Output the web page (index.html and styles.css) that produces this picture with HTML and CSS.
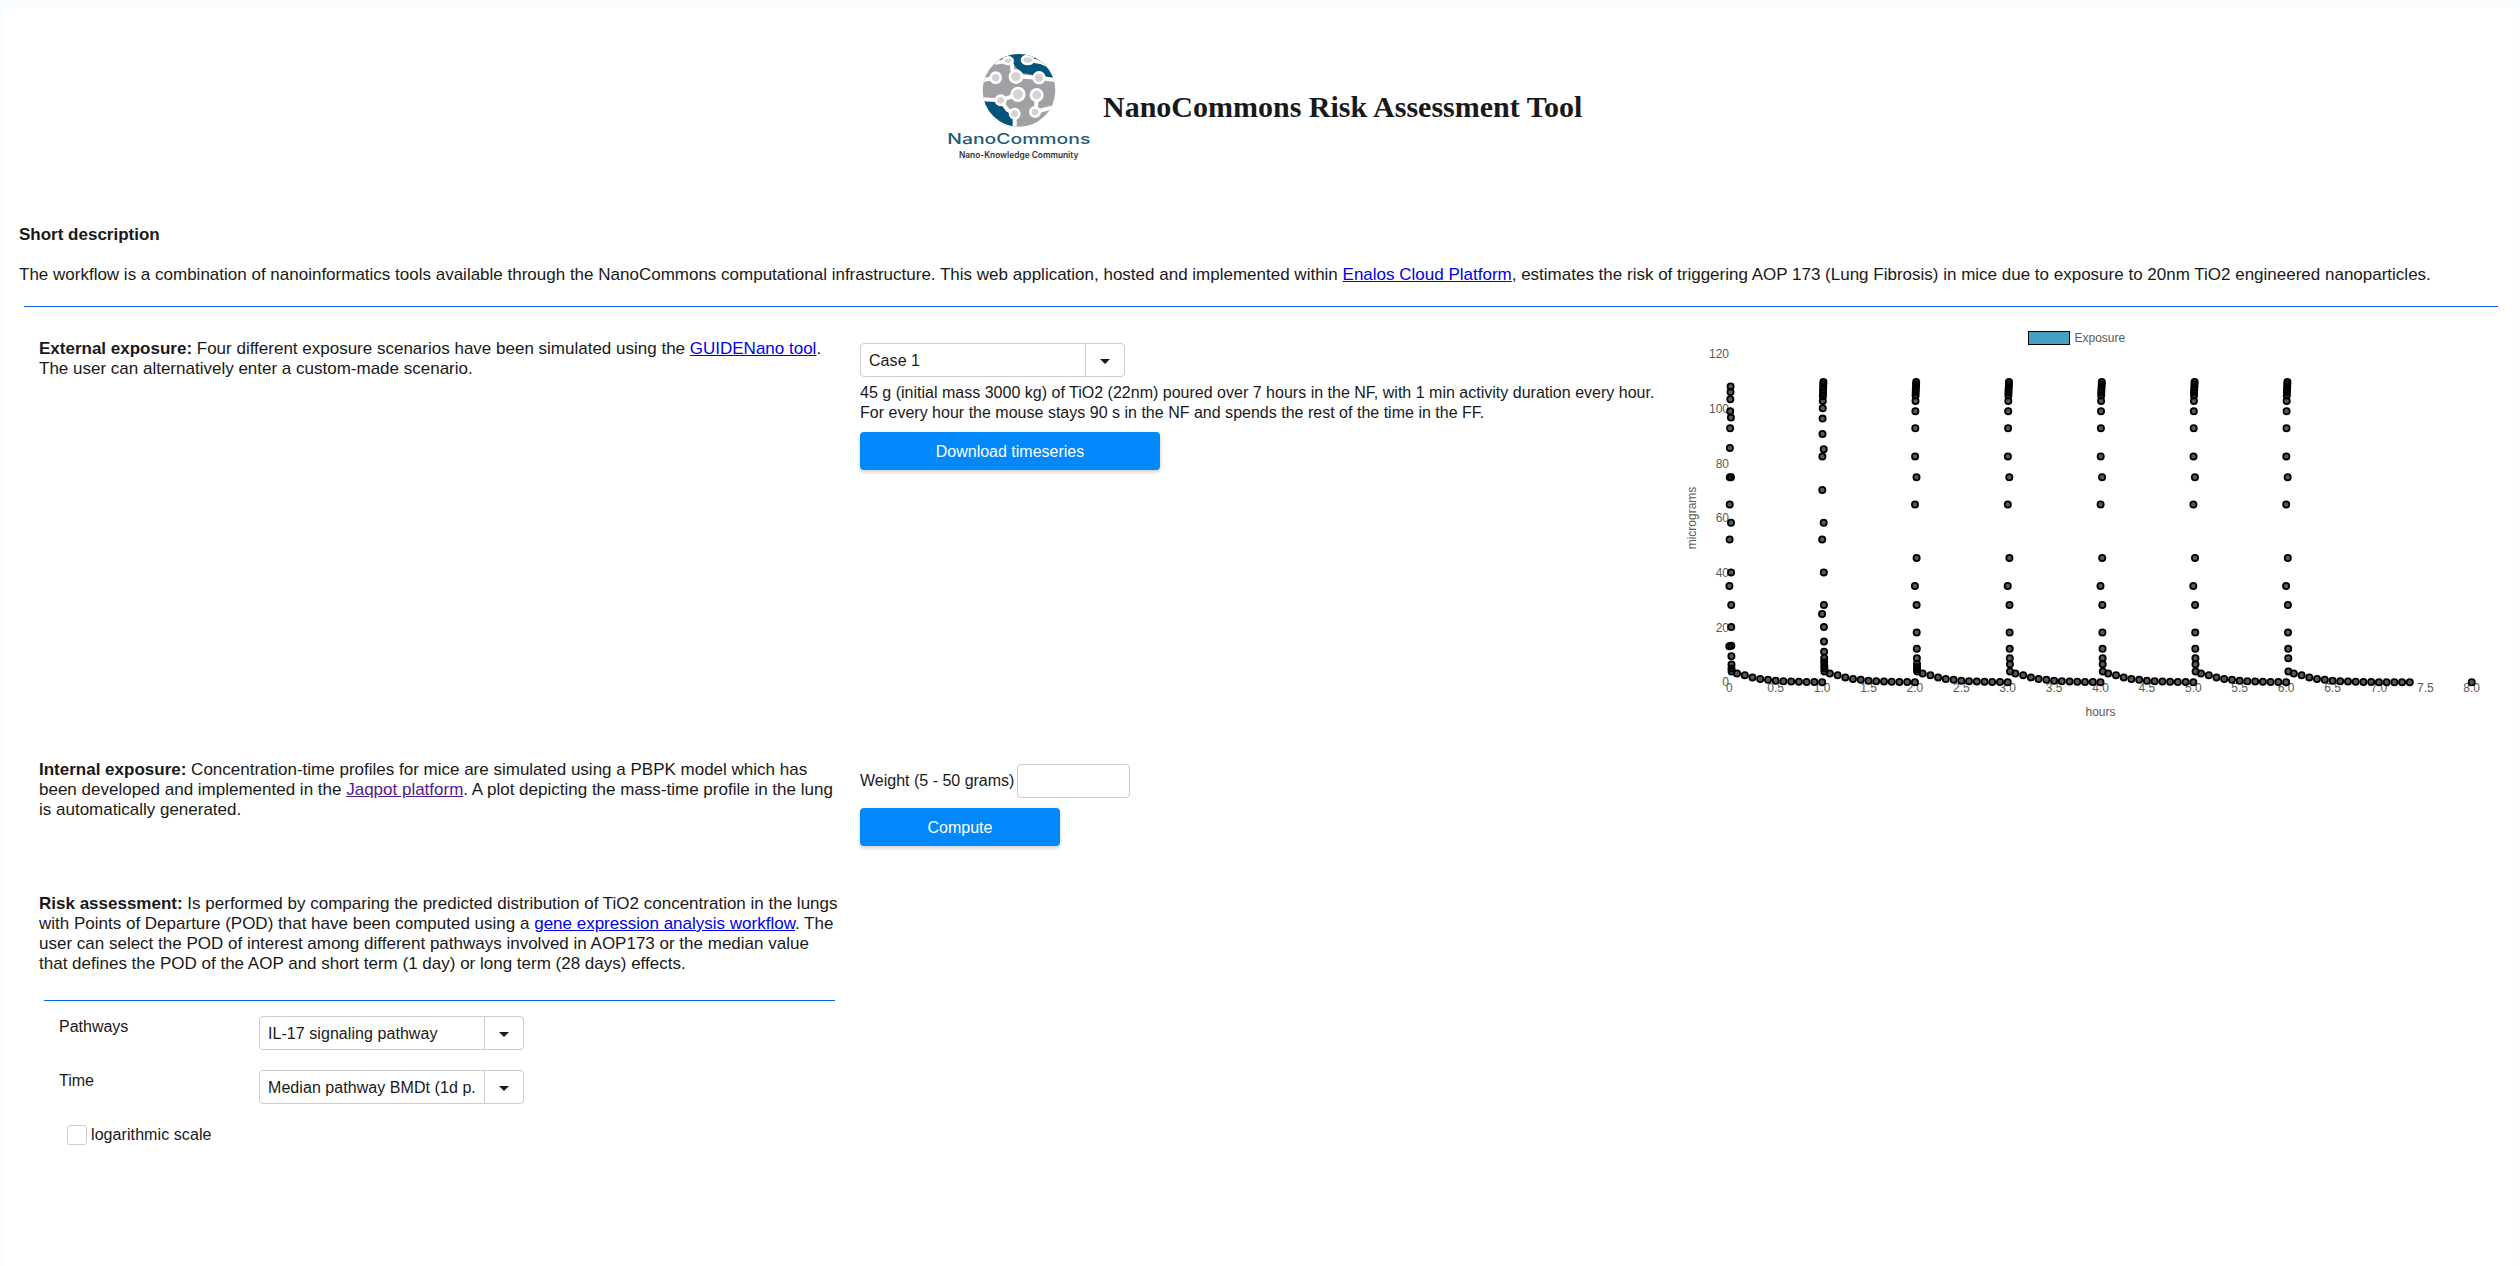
FILE: index.html
```html
<!DOCTYPE html>
<html lang="en">
<head>
<meta charset="utf-8">
<title>NanoCommons Risk Assessment Tool</title>
<link rel="stylesheet" href="styles.css">
</head>
<body>
<main class="page">
  <header class="header">
    <svg class="logo" viewBox="0 0 600 450" role="img" aria-label="NanoCommons">
      <defs><clipPath id="globe"><circle cx="297" cy="181" r="109"/></clipPath></defs>
      <g clip-path="url(#globe)">
        <rect x="180" y="60" width="230" height="240" fill="#9fa1a4"/>
        <path d="M225 60H410V144L357 143L330 133L300 128Q286 104 264 92L225 99Z" fill="#05527b"/>
        <path d="M180 213L241 212L266 244L284 252V300H180Z" fill="#05527b"/>
        <g class="traces">
          <path d="M225 98L264 92L276 104L277 120L288 139L357 143L412 151"/>
          <path d="M323 90L362 96L385 106"/>
          <path d="M185 151L227 143"/>
          <path d="M185 208L241 211L294 193"/>
          <path d="M241 211L263 240L284 251V300"/>
          <path d="M350 195L349 224L345 246L395 233"/>
        </g>
        <g class="nodes">
          <ellipse cx="264" cy="92" rx="14" ry="10"/>
          <ellipse cx="323" cy="90" rx="17" ry="12"/>
          <circle cx="227" cy="143" r="15"/>
          <circle cx="288" cy="140" r="18"/>
          <circle cx="357" cy="143" r="16"/>
          <circle cx="294" cy="193" r="19"/>
          <circle cx="350" cy="195" r="17"/>
          <circle cx="242" cy="211" r="14"/>
          <circle cx="284" cy="251" r="14"/>
          <circle cx="345" cy="246" r="14"/>
        </g>
      </g>
      <text class="logo-name" x="82" y="341" textLength="429" lengthAdjust="spacingAndGlyphs">NanoCommons</text>
      <text class="logo-tag" x="117" y="383" textLength="358" lengthAdjust="spacingAndGlyphs">Nano-Knowledge Community</text>
    </svg>
    <h1 class="title">NanoCommons Risk Assessment Tool</h1>
  </header>

  <section class="intro">
    <h2 class="intro-title">Short description</h2>
    <p class="intro-text">The workflow is a combination of nanoinformatics tools available through the NanoCommons computational infrastructure. This web application, hosted and implemented within <a href="#">Enalos Cloud Platform</a>, estimates the risk of triggering AOP 173 (Lung Fibrosis) in mice due to exposure to 20nm TiO2 engineered nanoparticles.</p>
  </section>
  <hr class="rule">

  <section class="row external">
    <p class="text"><b>External exposure:</b> Four different exposure scenarios have been simulated using the <a href="#">GUIDENano tool</a>.<br>The user can alternatively enter a custom-made scenario.</p>
    <div class="controls">
      <div class="combo"><span class="combo-value">Case 1</span><span class="combo-arrow"></span></div>
      <p class="case-info">45 g (initial mass 3000 kg) of TiO2 (22nm) poured over 7 hours in the NF, with 1 min activity duration every hour.<br>For every hour the mouse stays 90 s in the NF and spends the rest of the time in the FF.</p>
      <button class="btn btn-download">Download timeseries</button>
    </div>
    <svg class="chart" id="chart" viewBox="0 0 830 400"></svg>
  </section>

  <section class="row internal">
    <p class="text"><b>Internal exposure:</b> Concentration-time profiles for mice are simulated using a PBPK model which has<br>been developed and implemented in the <a class="visited" href="#">Jaqpot platform</a>. A plot depicting the mass-time profile in the lung<br>is automatically generated.</p>
    <div class="controls">
      <label class="weight">Weight (5 - 50 grams)<input class="weight-input" type="text"></label>
      <button class="btn btn-compute">Compute</button>
    </div>
  </section>

  <section class="risk">
    <p class="text"><b>Risk assessment:</b> Is performed by comparing the predicted distribution of TiO2 concentration in the lungs<br>with Points of Departure (POD) that have been computed using a <a href="#">gene expression analysis workflow</a>. The<br>user can select the POD of interest among different pathways involved in AOP173 or the median value<br>that defines the POD of the AOP and short term (1 day) or long term (28 days) effects.</p>
    <hr class="risk-rule">
    <div class="field"><span class="field-label">Pathways</span><div class="combo"><span class="combo-value">IL-17 signaling pathway</span><span class="combo-arrow"></span></div></div>
    <div class="field"><span class="field-label">Time</span><div class="combo"><span class="combo-value">Median pathway BMDt (1d p.</span><span class="combo-arrow"></span></div></div>
    <label class="check"><input class="check-box" type="checkbox">logarithmic scale</label>
  </section>
</main>
<script src="chart.js"></script>
</body>
</html>
```

FILE: styles.css
```css
* { box-sizing: border-box; }
body {
  margin: 0;
  padding: 8px 1px 0 3px;
  background: #f8fcff;
  color: #191919;
  font: 16px/20px "Liberation Sans", Helvetica, Arial, sans-serif;
  overflow: hidden;
}
p, h1, h2, hr { margin: 0; }
a { color: #0000ee; }
a.visited { color: #551a8b; }
.page { height: 1258px; background: #fff; }

.header { display: flex; padding: 22px 0 0 917px; height: 214px; }
.logo { width: 200px; height: 150px; flex: none; }
.traces { fill: none; stroke: #fff; stroke-width: 12; stroke-linejoin: round; }
.nodes { fill: #d3d3d5; stroke: #fff; stroke-width: 8; }
.logo-name { font: 500 43px "Inter", sans-serif; fill: #1c5a78; }
.logo-tag { font: 600 25px "Inter", sans-serif; fill: #333; }
.title { margin: 58px 0 0 -17px; font: bold 30px/38px "Liberation Serif", "Times New Roman", serif; white-space: nowrap; }

.intro { padding: 3px 0 0 16px; height: 80px; white-space: nowrap; font-size: 17px; }
.intro-title { font-size: 17px; line-height: 20px; margin-bottom: 20px; }
.rule { height: 1px; margin: 4px 21px 0 21px; border: 0; background: #0a60e8; }

.row { display: grid; grid-template-columns: 821px 820px 830px; padding-left: 36px; }
.text { font-size: 17px; white-space: nowrap; }
.external { height: 424px; padding-top: 11px; }
.external .text { padding-top: 21px; }
.external .controls { padding-top: 25px; }
.chart { width: 830px; height: 400px; }
.case-info { margin-top: 6px; white-space: nowrap; letter-spacing: .01px; }

.combo { display: flex; width: 265px; height: 34px; border: 1px solid #ccc; border-radius: 4px; background: #fff; }
.combo-value { width: 225px; padding: 7px 8px 5px; border-right: 1px solid #ccc; white-space: nowrap; letter-spacing: .06px; }
.combo-arrow { flex: 1; display: flex; align-items: center; justify-content: center; }
.combo-arrow::before { content: ""; margin-top: 2px; border: 5px solid transparent; border-top: 5px solid #191919; border-bottom: 0; }

.btn { display: block; height: 38px; padding: 2px 0 0; border: 0; border-radius: 4px; background: #0288fb; color: #fff; font: inherit; box-shadow: 0 2px 4px rgba(0, 0, 0, .2); }
.btn-download { width: 300px; margin-top: 9px; }
.btn-compute { width: 200px; margin-top: 10px; }

.internal { height: 134px; padding-top: 29px; }
.internal .controls { padding-top: 4px; }
.weight { display: flex; justify-content: space-between; align-items: center; width: 270px; }
.weight-input { width: 113px; height: 34px; border: 1px solid #ccc; border-radius: 4px; }

.risk { width: 832px; padding: 29px 0 0 36px; }
.risk-rule { height: 1px; margin: 26px 0 15px 5px; border: 0; background: #0a60e8; }
.field { display: flex; height: 54px; padding-left: 20px; }
.field-label { width: 200px; padding-top: 1px; }
.check { display: flex; align-items: center; gap: 4px; width: 200px; padding: 1px 0 0 28px; white-space: nowrap; letter-spacing: .08px; }
.check-box { appearance: none; flex: none; width: 20px; height: 20px; margin: 0; border: 1px solid #ccc; border-radius: 3px; background: #fff; }

.axis { font: 12px "Liberation Sans", Helvetica, Arial, sans-serif; fill: #595959; }
.end { text-anchor: end; }
.mid { text-anchor: middle; }
.swatch { fill: #45a1c2; stroke: #000; stroke-width: 1; }
.dot { fill: rgba(0, 0, 0, .65); stroke: #000; stroke-width: 1.8; }
```

FILE: chart.js
```javascript
const chart = document.getElementById('chart');
const X0 = 49.3, Y0 = 364.3, HOUR = 92.8, MICROGRAM = 2.735;

function add(tag, attrs, text) {
  const el = document.createElementNS('http://www.w3.org/2000/svg', tag);
  for (const key in attrs) el.setAttribute(key, attrs[key]);
  if (text) el.textContent = text;
  chart.appendChild(el);
}
function dot(hour, value) {
  add('circle', { class: 'dot', cx: (X0 + hour * HOUR).toFixed(1), cy: (Y0 - value * MICROGRAM).toFixed(1), r: 3.1 });
}

// legend and axis titles
add('rect', { class: 'swatch', x: 348.5, y: 13.5, width: 41, height: 13 });
add('text', { class: 'axis', x: 394.5, y: 24 }, 'Exposure');
add('text', { class: 'axis mid', x: 420.5, y: 398 }, 'hours');
add('text', { class: 'axis mid', transform: 'translate(16 200) rotate(-90)' }, 'micrograms');

// tick labels
for (let v = 0; v <= 120; v += 20) add('text', { class: 'axis end', x: 49, y: Y0 - v * MICROGRAM + 4 }, String(v));
for (let h = 0; h <= 8; h += 0.5) add('text', { class: 'axis mid', x: X0 + h * HOUR, y: 374 }, h ? h.toFixed(1) : '0');

// each pulse rises within seconds, drops, then decays until the next hour
const rise = [35.2, 65, 82.6, 92.9, 99.1, 102.9, 104.9, 106, 107, 108, 109, 109.8];
const pulses = [
  { up: [13.2, 35.2, 52.2, 65, 75, 85.7, 92.9, 99.1, 103.5, 106.1, 108.2], down: [96.8, 75, 58.3, 40.2, 28.3, 20.2, 13.4, 9.5, 6.5, 5, 4] },
  { up: [25, 52.2, 70.3, 82.6, 90.8, 96.4, 100.2, 102.9, 104.6, 105.8, 107, 108, 109, 109.8], down: [85.2, 58.3, 40.2, 28.3, 20.2, 14.9, 11.2, 8.8, 7.3, 6, 5, 4] },
  { up: rise, down: [75, 45.5, 28.3, 18.2, 12.3, 8.8, 6.8, 5.6, 4.8, 4] },
  { up: rise, down: [75, 45.5, 28.3, 18.2, 12.3, 8.8, 6.6, 4] },
  { up: rise, down: [75, 45.5, 28.3, 18.2, 12.3, 8.8, 6.6, 4] },
  { up: rise, down: [75, 45.5, 28.3, 18.2, 12.3, 8.8, 6.6, 4] },
  { up: rise, down: [75, 45.5, 28.3, 18.2, 12.3, 8.8, 4] }
];
const tail = [3.2, 2.6, 1.8, 1.2, 0.9, 0.6, 0.4, 0.3, 0.2, 0.1, 0.1, 0, 0, 0, 0, 0];
pulses.forEach((p, hour) => {
  p.up.forEach((v, i) => dot(hour + 0.014 * i / (p.up.length - 1), v));
  p.down.forEach((v, i) => dot(hour + 0.017 + 0.008 * i / (p.down.length - 1), v));
  tail.slice(0, hour === 6 ? 16 : 12).forEach((v, i) => dot(hour + (i + 1) / 12, v));
});
dot(8, 0);
```
